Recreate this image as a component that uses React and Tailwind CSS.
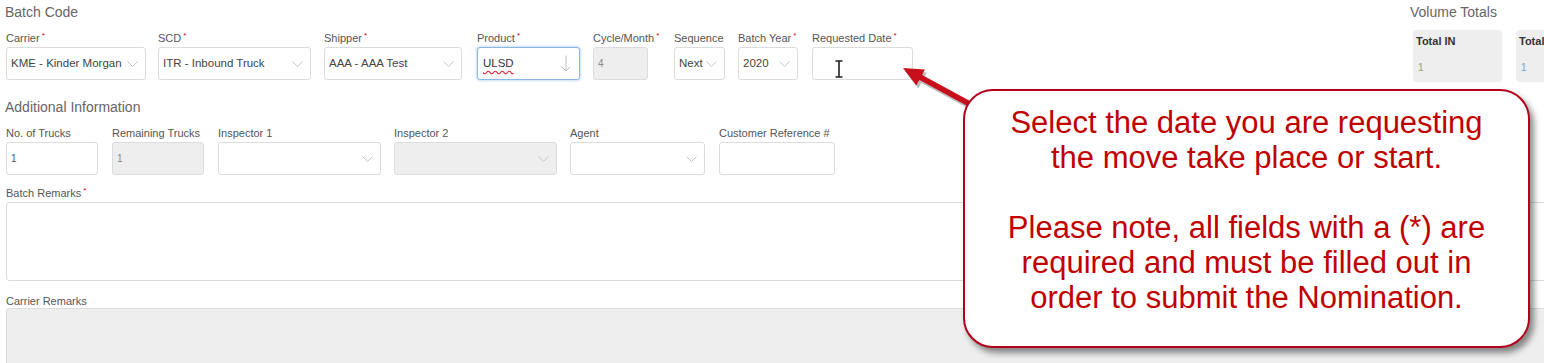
const Chevron = () => (
  <svg width="11" height="6" viewBox="0 0 11 6" className="shrink-0">
    <polyline points="0.5,0.5 5.5,5.5 10.5,0.5" fill="none" stroke="#c4c4c4" strokeWidth="1" />
  </svg>
)

const Label = ({ children, req }) => (
  <div className="h-[14px] text-[11px] leading-[14px] text-[#555] whitespace-nowrap">
    {children}
    {req && <span className="ml-[2px] align-top text-[8px] leading-[10px] text-[#d0021b]">*</span>}
  </div>
)

const Box = ({ w, gray, children, className = '' }) => (
  <div
    className={`relative mt-[2px] flex h-[33px] items-center rounded-[3px] border pl-[4px] pr-[7px] text-[11.5px] text-[#444] ${
      gray ? 'border-[#dcdcdc] bg-[#eeeeee]' : 'border-[#dcdcdc] bg-white'
    } ${className}`}
    style={{ width: w }}
  >
    {children}
  </div>
)

const Field = ({ label, req, col, w, value, select, gray, muted }) => (
  <div className="shrink-0" style={{ width: col }}>
    <Label req={req}>{label}</Label>
    <Box w={w} gray={gray}>
      <span className={`flex-1 truncate ${muted ? 'text-[10px] text-[#888]' : ''}`}>{value}</span>
      {select && <Chevron />}
    </Box>
  </div>
)

export default function App() {
  return (
    <div className="relative h-[363px] w-[1544px] overflow-hidden bg-white pl-[6px] font-['Liberation_Sans',Arial,sans-serif]">
      <div className="flex items-start">
        <div className="w-[1404px] shrink-0">
          <div className="-ml-px h-[20px] pt-[2px] text-[14px] leading-[20px] text-[#666]">Batch Code</div>
          <div className="mt-[11px] flex gap-3">
            <Field label="Carrier" req col={140} w={140} value="KME - Kinder Morgan" select />
            <Field label="SCD" req col={154} w={153} value="ITR - Inbound Truck" select />
            <Field label="Shipper" req col={141} w={138} value="AAA - AAA Test" select />
            <div className="w-[104px] shrink-0">
              <Label req>Product</Label>
              <Box w={103} className="!border-[#8db6e6] shadow-[0_0_3px_rgba(102,160,230,0.7)]">
                <span className="flex-1 pl-[1px] text-[#333] underline decoration-[#e0203a] decoration-wavy underline-offset-[3px]">
                  ULSD
                </span>
                <svg width="10" height="17" viewBox="0 0 10 17" className="mr-[1px]">
                  <path d="M5 0.5V16M0.8 11.8L5 16L9.2 11.8" fill="none" stroke="#bdbdbd" strokeWidth="1" />
                </svg>
              </Box>
            </div>
            <Field label="Cycle/Month" req col={69} w={55} value="4" gray muted />
            <Field label="Sequence" col={52} w={51} value="Next" select />
            <Field label="Batch Year" req col={62} w={60} value="2020" select />
            <div className="w-[101px] shrink-0">
              <Label req>Requested Date</Label>
              <Box w={101}>
                <svg width="8" height="18" viewBox="0 0 8 18" className="absolute left-[22px] top-[12px]">
                  <path d="M0.5 1H7.5M4 1V17M0.5 17H7.5" fill="none" stroke="#222" strokeWidth="1.6" />
                </svg>
              </Box>
            </div>
          </div>
        </div>
        <div className="shrink-0">
          <div className="h-[20px] pt-[2px] text-[14px] leading-[20px] text-[#666]">Volume Totals</div>
          <div className="ml-[3px] mt-[10px] flex gap-[14px]">
            {['Total IN', 'Total'].map((t) => (
              <div key={t} className="h-[52px] w-[89px] shrink-0 rounded-[4px] bg-[#eeeeee] px-[3px] pt-[4px]">
                <div className="whitespace-nowrap text-[11px] font-bold leading-[14px] text-[#333]">{t}</div>
                <div className="mt-[14px] pl-[2px] text-[10px] leading-[12px] text-[#999]">1</div>
              </div>
            ))}
          </div>
        </div>
      </div>

      <div className="-ml-px mt-[15px] h-[20px] text-[14px] leading-[20px] text-[#666]">Additional Information</div>
      <div className="mt-[9px] flex gap-3">
        <Field label="No. of Trucks" col={94} w={92} value={<span className="text-[10px] text-[#555]">1</span>} />
        <Field label="Remaining Trucks" col={94} w={92} value="1" gray muted />
        <Field label="Inspector 1" col={164} w={163} value="" select />
        <Field label="Inspector 2" col={164} w={163} value="" select gray />
        <Field label="Agent" col={137} w={135} value="" select />
        <Field label="Customer Reference #" col={116} w={116} value="" />
      </div>

      <div className="mt-[11px]">
        <Label req>Batch Remarks</Label>
        <div className="mt-[2px] h-[79px] w-[1560px] rounded-[3px] border border-[#dcdcdc] bg-white" />
      </div>
      <div className="mt-[13px]">
        <Label>Carrier Remarks</Label>
        <div className="h-[80px] w-[1560px] rounded-[3px] border border-[#dcdcdc] bg-[#eeeeee]" />
      </div>

      <svg width="95" height="60" viewBox="0 0 95 60" className="absolute left-[895px] top-[60px]">
        <g transform="translate(2 3)" opacity="0.35">
          <path d="M24 16.5L82 48" stroke="#444" strokeWidth="5.5" />
          <polygon points="8,8 21.3,25.4 29.9,9.6" fill="#444" />
        </g>
        <path d="M24 16.5L82 48" stroke="#c8101c" strokeWidth="5.5" />
        <polygon points="8,8 21.3,25.4 29.9,9.6" fill="#c8101c" />
      </svg>

      <div className="absolute left-[963px] top-[89px] h-[259px] w-[567px] rounded-[30px] border-2 border-[#b5001b] bg-white pt-[14px] text-center text-[31px] leading-[35px] text-[#c00000] shadow-[4px_5px_6px_rgba(0,0,0,0.45)]">
        <div>Select the date you are requesting</div>
        <div>the move take place or start.</div>
        <div className="h-[35px]" />
        <div>Please note, all fields with a (*) are</div>
        <div>required and must be filled out in</div>
        <div>order to submit the Nomination.</div>
      </div>
    </div>
  )
}
